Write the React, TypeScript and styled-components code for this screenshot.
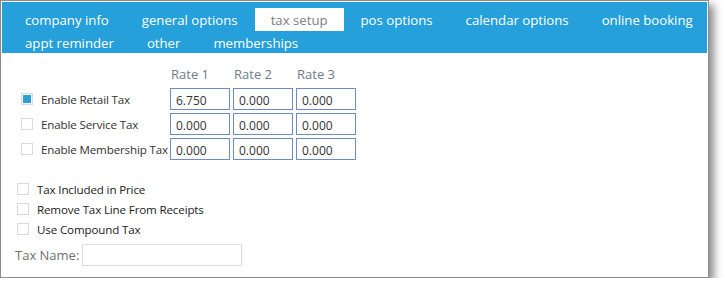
import styled, { createGlobalStyle } from 'styled-components';

const GlobalStyle = createGlobalStyle`
  * { box-sizing: border-box; }
  body {
    margin: 0;
    background: #fff;
    font-family: 'Open Sans', 'Noto Sans', sans-serif;
  }
`;

const tabRows = [
  ['company info', 'general options', 'tax setup', 'pos options', 'calendar options', 'online booking'],
  ['appt reminder', 'other', 'memberships'],
];

const taxRows = [
  { label: 'Enable Retail Tax', checked: true, rates: ['6.750', '0.000', '0.000'] },
  { label: 'Enable Service Tax', checked: false, rates: ['0.000', '0.000', '0.000'] },
  { label: 'Enable Membership Tax', checked: false, rates: ['0.000', '0.000', '0.000'] },
];

const options = ['Tax Included in Price', 'Remove Tax Line From Receipts', 'Use Compound Tax'];

const App = () => {
  return (
    <>
      <GlobalStyle />
      <Frame>
        <TabBar>
          {tabRows.map((row, i) => (
            <TabRow key={i}>
              {row.map((tab) => (
                <Tab key={tab} $active={tab === 'tax setup'}>
                  {tab}
                </Tab>
              ))}
            </TabRow>
          ))}
        </TabBar>
        <Content>
          <RateGrid>
            <span />
            <RateHead>Rate 1</RateHead>
            <RateHead>Rate 2</RateHead>
            <RateHead>Rate 3</RateHead>
            {taxRows.map((row) => [
              <CheckLabel key={row.label}>
                <Check $checked={row.checked} />
                {row.label}
              </CheckLabel>,
              ...row.rates.map((rate, j) => (
                <RateInput key={row.label + j} defaultValue={rate} />
              )),
            ])}
          </RateGrid>
          <Options>
            {options.map((opt) => (
              <OptionRow key={opt}>
                <Check $checked={false} />
                {opt}
              </OptionRow>
            ))}
          </Options>
          <NameRow>
            <NameLabel>Tax Name:</NameLabel>
            <NameInput />
          </NameRow>
        </Content>
      </Frame>
    </>
  );
};

const Frame = styled.div`
  width: 709px;
  height: 278px;
  border: 1px solid #8c8c8c;
  padding: 1px;
  background: #fff;
  box-shadow: 5px 5px 8px rgba(0, 0, 0, 0.45);
`;

const TabBar = styled.div`
  display: flex;
  flex-direction: column;
  height: 51px;
  padding: 6px 0 0 7px;
  background: #26a0da;
`;

const TabRow = styled.div`
  display: flex;
  gap: 1px;
  height: 23px;
`;

const Tab = styled.div<{ $active: boolean }>`
  display: flex;
  align-items: center;
  padding: 2px 16px 0;
  font-size: 13.2px;
  color: ${(p) => (p.$active ? '#808080' : '#fff')};
  background: ${(p) => (p.$active ? '#fff' : 'transparent')};
  white-space: nowrap;
`;

const Content = styled.div`
  display: flex;
  flex-direction: column;
  padding: 10px 0 0 13px;
`;

const RateGrid = styled.div`
  display: grid;
  grid-template-columns: 146px 60px 60px 60px;
  grid-auto-rows: 22px;
  column-gap: 3px;
  row-gap: 3px;
  padding-left: 6px;
`;

const RateHead = styled.div`
  display: flex;
  align-items: center;
  padding: 0 0 1px 1px;
  font-size: 13px;
  color: #6e7c8c;
`;

const CheckLabel = styled.label`
  display: flex;
  align-items: center;
  gap: 8px;
  font-size: 11.6px;
  letter-spacing: -0.15px;
  color: #333;
  white-space: nowrap;
`;

const Check = styled.span<{ $checked: boolean }>`
  flex: none;
  width: 12px;
  height: 12px;
  border: 1px solid #dadada;
  background: ${(p) => (p.$checked ? '#2a9fd8' : '#fff')};
  box-shadow: ${(p) => (p.$checked ? 'inset 0 0 0 1px #fff' : 'none')};
`;

const RateInput = styled.input`
  width: 60px;
  height: 22px;
  border: 1px solid #6e8cc4;
  padding: 2px 0 0 5px;
  font: 12px 'Open Sans', 'Noto Sans', sans-serif;
  color: #333;
  outline: none;
`;

const Options = styled.div`
  display: flex;
  flex-direction: column;
  margin-top: 19px;
  padding-left: 2px;
`;

const OptionRow = styled.label`
  display: flex;
  align-items: center;
  gap: 8px;
  height: 20px;
  font-size: 11.6px;
  letter-spacing: -0.15px;
  color: #222;
`;

const NameRow = styled.div`
  display: flex;
  align-items: center;
  gap: 3px;
  margin-top: 5px;
`;

const NameLabel = styled.span`
  font-size: 13px;
  color: #707070;
`;

const NameInput = styled.input`
  width: 160px;
  height: 22px;
  border: 1px solid #dedede;
  outline: none;
`;

export default App;
